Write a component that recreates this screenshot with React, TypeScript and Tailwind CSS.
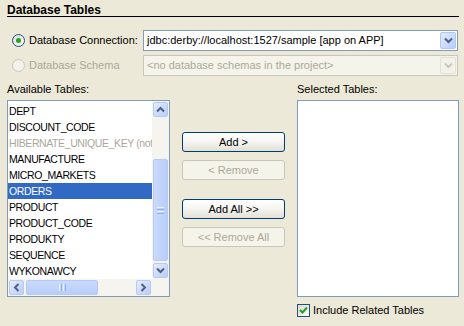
import React from "react";

const items: { t: string; dim?: boolean; sel?: boolean }[] = [
  { t: "DEPT" },
  { t: "DISCOUNT_CODE" },
  { t: "HIBERNATE_UNIQUE_KEY (not available)", dim: true },
  { t: "MANUFACTURE" },
  { t: "MICRO_MARKETS" },
  { t: "ORDERS", sel: true },
  { t: "PRODUCT" },
  { t: "PRODUCT_CODE" },
  { t: "PRODUKTY" },
  { t: "SEQUENCE" },
  { t: "WYKONAWCY" },
];

function Chevron({ dir, color = "#4D6185" }: { dir: "up" | "down" | "left" | "right"; color?: string }) {
  const rot = { down: 0, up: 180, left: 90, right: -90 }[dir];
  return (
    <svg width="9" height="7" viewBox="0 0 9 7" style={{ transform: `rotate(${rot}deg)` }}>
      <path d="M1 1.5 L4.5 5 L8 1.5" fill="none" stroke={color} strokeWidth="2" />
    </svg>
  );
}

function ScrollBtn({ dir }: { dir: "up" | "down" | "left" | "right" }) {
  return (
    <div className="w-[15px] h-[15px] rounded-[2px] border border-[#B6CAF5] bg-gradient-to-br from-[#E3ECFE] to-[#BACDF8] flex items-center justify-center">
      <Chevron dir={dir} />
    </div>
  );
}

function Button({ label, disabled }: { label: string; disabled?: boolean }) {
  return disabled ? (
    <div className="h-[20px] rounded-[3px] border border-[#C9C7BA] bg-[#F5F4EA] text-[#ACA899] flex items-center justify-center">
      {label}
    </div>
  ) : (
    <div className="h-[20px] rounded-[3px] border border-[#003C74] bg-gradient-to-b from-[#FFFFFF] via-[#F5F4F0] to-[#E2DFD6] text-black flex items-center justify-center">
      {label}
    </div>
  );
}

export default function App() {
  return (
    <div
      className="w-[464px] h-[326px] bg-[#ECE9D8] pl-[7px] pr-[5px] flex flex-col text-[11px] leading-[13px] text-black overflow-hidden"
      style={{ fontFamily: '"Liberation Sans", Arial, sans-serif' }}
    >
      <div className="mt-[3px] h-[13px] leading-[14px] text-[12px] font-bold">Database Tables</div>
      <div className="h-px bg-[#000000]" />

      {/* Row 1 */}
      <div className="mt-[13px] flex items-center h-[21px]">
        <div className="w-[136px] flex items-center">
          <div className="ml-[5px] w-[13px] h-[13px] rounded-full border border-[#1C5180] bg-gradient-to-br from-[#DCD9CE] to-[#FFFFFF] flex items-center justify-center">
            <div className="w-[5px] h-[5px] rounded-full bg-[#27A227]" />
          </div>
          <span className="ml-[4px]">Database Connection:</span>
        </div>
        <div className="w-[315px] h-[21px] border border-[#7F9DB9] bg-white flex items-center">
          <span className="flex-1 pl-[3px] whitespace-nowrap overflow-hidden">jdbc:derby://localhost:1527/sample [app on APP]</span>
          <div className="w-[16px] h-[17px] mr-px rounded-[2px] border border-[#B1C6F7] bg-gradient-to-br from-[#E3ECFE] to-[#B9CCF8] flex items-center justify-center">
            <Chevron dir="down" />
          </div>
        </div>
      </div>

      {/* Row 2 */}
      <div className="mt-[4px] flex items-center h-[21px]">
        <div className="w-[136px] flex items-center">
          <div className="ml-[5px] w-[13px] h-[13px] rounded-full border border-[#CAC8BB] bg-[#F2F1EC]" />
          <span className="ml-[4px] text-[#ACA899]">Database Schema</span>
        </div>
        <div className="w-[315px] h-[21px] border border-[#C9C7BA] bg-[#F5F4EA] flex items-center">
          <span className="flex-1 pl-[3px] text-[#ACA899] whitespace-nowrap overflow-hidden">&lt;no database schemas in the project&gt;</span>
          <div className="w-[16px] h-[17px] mr-px rounded-[2px] border border-[#E2E0D6] bg-[#F2F1EA] flex items-center justify-center">
            <Chevron dir="down" color="#C9C7BA" />
          </div>
        </div>
      </div>

      {/* Main */}
      <div className="mt-[7px] flex">
        <div className="w-[163px] flex flex-col">
          <div className="h-[13px]">Available Tables:</div>
          <div className="mt-[4px] h-[197px] border border-[#7F9DB9] bg-white flex flex-col">
            <div className="flex flex-1 min-h-0">
              <div className="flex-1 pt-[2px] overflow-hidden">
                {items.map((it) => (
                  <div
                    key={it.t}
                    className={
                      "h-[16px] leading-[16px] pl-px whitespace-nowrap overflow-hidden text-[10.5px] tracking-[-0.4px] " +
                      (it.sel ? "bg-[#316AC5] text-white" : it.dim ? "text-[#ACA899]" : "text-black")
                    }
                  >
                    {it.t}
                  </div>
                ))}
              </div>
              <div className="w-[17px] bg-[#F5F4EF] flex flex-col items-center pt-px pb-px">
                <ScrollBtn dir="up" />
                <div className="flex-1 w-full" />
                <div className="w-[15px] h-[102px] rounded-[2px] border border-[#B6CAF5] bg-gradient-to-r from-[#C9DAFD] to-[#B9CDF8] flex flex-col items-center justify-center gap-[1px]">
                  <div className="w-[7px] h-px bg-[#EEF4FE]" />
                  <div className="w-[7px] h-px bg-[#8CB0F8]" />
                  <div className="w-[7px] h-px bg-[#EEF4FE]" />
                  <div className="w-[7px] h-px bg-[#8CB0F8]" />
                </div>
                <div className="h-[2px]" />
                <ScrollBtn dir="down" />
              </div>
            </div>
            <div className="h-[17px] flex">
              <div className="flex-1 bg-[#F5F4EF] flex items-center pl-px pr-px">
                <ScrollBtn dir="left" />
                <div className="ml-[2px] w-[72px] h-[15px] rounded-[2px] border border-[#B6CAF5] bg-gradient-to-b from-[#C9DAFD] to-[#B9CDF8] flex items-center justify-center gap-[1px]">
                  <div className="h-[7px] w-px bg-[#EEF4FE]" />
                  <div className="h-[7px] w-px bg-[#8CB0F8]" />
                  <div className="h-[7px] w-px bg-[#EEF4FE]" />
                  <div className="h-[7px] w-px bg-[#8CB0F8]" />
                </div>
                <div className="flex-1" />
                <ScrollBtn dir="right" />
              </div>
              <div className="w-[17px] bg-[#F5F4EF]" />
            </div>
          </div>
        </div>

        <div className="ml-[12px] w-[103px] flex flex-col">
          <div className="h-[49px]" />
          <Button label="Add >" />
          <div className="h-[8px]" />
          <Button label="< Remove" disabled />
          <div className="h-[19px]" />
          <Button label="Add All >>" />
          <div className="h-[8px]" />
          <Button label="<< Remove All" disabled />
        </div>

        <div className="ml-[12px] w-[162px] flex flex-col">
          <div className="h-[13px]">Selected Tables:</div>
          <div className="mt-[4px] h-[197px] border border-[#7F9DB9] bg-white" />
          <div className="mt-[7px] flex items-center h-[13px]">
            <div className="w-[13px] h-[13px] border border-[#1C5180] bg-gradient-to-br from-[#DCD9CE] to-[#FFFFFF] flex items-center justify-center">
              <svg width="9" height="9" viewBox="0 0 9 9">
                <path d="M1 4 L3.5 6.5 L8 1.5" fill="none" stroke="#21A121" strokeWidth="2" />
              </svg>
            </div>
            <span className="ml-[3px]">Include Related Tables</span>
          </div>
        </div>
      </div>
    </div>
  );
}
